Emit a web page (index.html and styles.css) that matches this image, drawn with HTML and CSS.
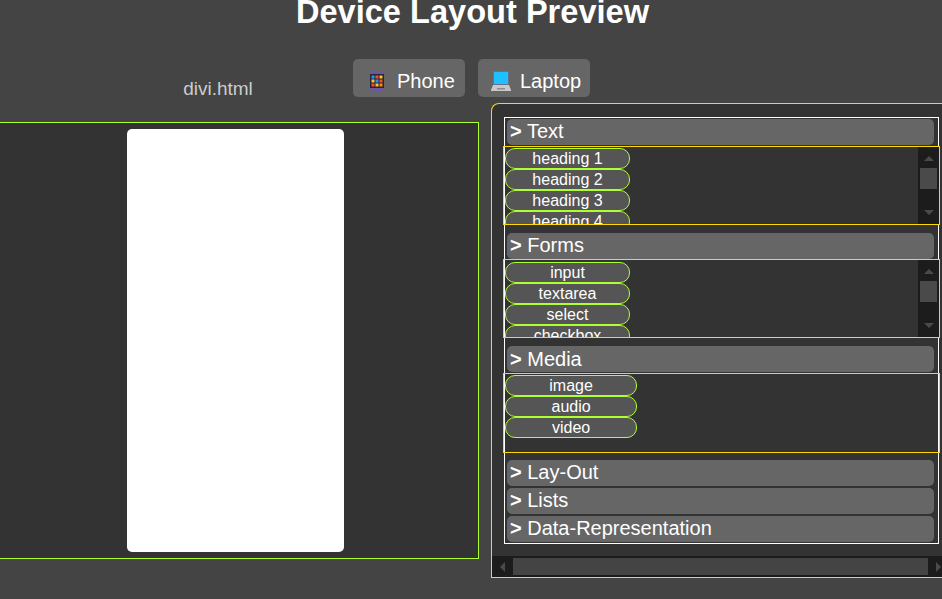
FILE: index.html
```html
<!DOCTYPE html>
<html lang="en">
<head>
    <meta charset="UTF-8">
    <meta name="viewport" content="width=device-width, initial-scale=1.0">
    <title>Device Layout Preview</title>
    <link rel="stylesheet" href="styles.css">
</head>
<body>
    <h1 class="title">Device Layout Preview</h1>
    <div class="toolbar">
        <div class="file-name">divi.html</div>
        <button class="device-btn phone-btn">
            <svg class="icon" width="20" height="20" viewBox="0 0 20 20">
                <rect x="3" y="0" width="14" height="20" rx="2" fill="#6a5a9a"/>
                <rect x="3" y="3" width="14" height="14" fill="#2a2438"/>
                <rect x="4.5" y="4.5" width="3" height="3" fill="#2196f3"/>
                <rect x="8.5" y="4.5" width="3" height="3" fill="#f4511e"/>
                <rect x="12.5" y="4.5" width="3" height="3" fill="#fbc02d"/>
                <rect x="4.5" y="8.5" width="3" height="3" fill="#fbc02d"/>
                <rect x="8.5" y="8.5" width="3" height="3" fill="#2196f3"/>
                <rect x="12.5" y="8.5" width="3" height="3" fill="#f4511e"/>
                <rect x="4.5" y="12.5" width="3" height="3" fill="#f4511e"/>
                <rect x="8.5" y="12.5" width="3" height="3" fill="#fbc02d"/>
                <rect x="12.5" y="12.5" width="3" height="3" fill="#fb8c00"/>
            </svg>
            Phone
        </button>
        <button class="device-btn">
            <svg class="icon" width="20" height="20" viewBox="0 0 20 20">
                <rect x="2" y="0" width="16" height="14" fill="#6a6f8a"/>
                <rect x="3" y="1" width="14" height="12" fill="#1fc0ff"/>
                <path d="M2 14h16l2 5v1H0v-1z" fill="#c9c9c9"/>
                <rect x="6" y="17" width="8" height="1.5" fill="#8d8d8d"/>
            </svg>
            Laptop
        </button>
    </div>
    <div class="workspace">
        <div class="preview">
            <div class="screen"></div>
        </div>
        <div class="panel">
            <div class="panel-body">
                <div class="groups">
                    <div class="group-head"><b>&gt;</b> Text</div>
                    <div class="group-list">
                        <div class="items">
                            <div class="item">heading 1</div>
                            <div class="item">heading 2</div>
                            <div class="item">heading 3</div>
                            <div class="item">heading 4</div>
                        </div>
                        <div class="vbar">
                            <span class="arrow-up"></span>
                            <span class="vthumb"></span>
                            <span class="arrow-down"></span>
                        </div>
                    </div>
                    <div class="group-head next"><b>&gt;</b> Forms</div>
                    <div class="group-list forms-list">
                        <div class="items">
                            <div class="item">input</div>
                            <div class="item">textarea</div>
                            <div class="item">select</div>
                            <div class="item">checkbox</div>
                        </div>
                        <div class="vbar">
                            <span class="arrow-up"></span>
                            <span class="vthumb"></span>
                            <span class="arrow-down"></span>
                        </div>
                    </div>
                    <div class="group-head next media-head"><b>&gt;</b> Media</div>
                    <div class="group-list media-list">
                        <div class="items">
                            <div class="item">image</div>
                            <div class="item">audio</div>
                            <div class="item">video</div>
                        </div>
                    </div>
                    <div class="group-head after-media"><b>&gt;</b> Lay-Out</div>
                    <div class="group-head"><b>&gt;</b> Lists</div>
                    <div class="group-head last"><b>&gt;</b> Data-Representation</div>
                </div>
            </div>
            <div class="hbar">
                <span class="hbtn"><span class="arrow-left"></span></span>
                <span class="hthumb"></span>
                <span class="hbtn"><span class="arrow-right"></span></span>
            </div>
        </div>
    </div>
</body>
</html>
```

FILE: styles.css
```css
html, body {
    margin: 0;
    height: 100%;
}
body {
    background-color: #444;
    color: white;
    font-family: "Liberation Sans", Arial, sans-serif;
    overflow: hidden;
}
.title {
    margin: -7px 0 0;
    padding-left: 3px;
    font-size: 32.6px;
    line-height: 37px;
    text-align: center;
}
.toolbar {
    display: flex;
    gap: 13px;
    margin-top: 29px;
    padding-left: 96px;
}
.file-name {
    width: 244px;
    padding-top: 19px;
    color: #ccc;
    font-size: 19px;
    line-height: 22px;
    text-align: center;
}
.device-btn {
    display: flex;
    align-items: center;
    gap: 9px;
    width: 112px;
    height: 38px;
    padding: 6px 0 0 13px;
    border: none;
    border-radius: 5px;
    background-color: #666;
    color: white;
    font-family: inherit;
    font-size: 20px;
}
.phone-btn {
    gap: 10px;
    padding-left: 14px;
}
.icon {
    flex: none;
}
.workspace {
    display: flex;
    align-items: flex-start;
    gap: 12px;
    margin-top: 3px;
    margin-left: -8px;
}
.preview {
    flex: none;
    display: flex;
    justify-content: center;
    width: 487px;
    height: 437px;
    box-sizing: border-box;
    margin-top: 19px;
    padding-top: 6px;
    border: 1px solid greenyellow;
    background-color: #333;
}
.screen {
    width: 217px;
    height: 423px;
    border-radius: 5px;
    background-color: white;
}
.panel {
    flex: none;
    width: 460px;
    height: 475px;
    box-sizing: border-box;
    border: 1px solid #ffd700;
    border-right: none;
    border-radius: 8px 0 0 0;
    background-color: #333;
    overflow: hidden;
}
.panel-body {
    height: 452px;
    padding: 13px 0 0 12px;
    box-sizing: border-box;
}
.groups {
    width: 435px;
    box-sizing: border-box;
    padding: 1px 0;
    border: 1px solid white;
}
.group-head {
    height: 26px;
    margin: 0 4px 2px 2px;
    padding-left: 3px;
    border-radius: 5px;
    background-color: #666;
    font-size: 20px;
    line-height: 24px;
}
.group-head.next {
    margin-top: 8px;
}
.group-head.media-head {
    line-height: 26px;
}
.group-head.after-media {
    margin-top: 7px;
}
.group-head.last {
    margin-bottom: 0;
}
.group-list {
    display: flex;
    height: 79px;
    box-sizing: border-box;
    margin: -1px -2px 0 -2px;
    border: 1px solid #ffd700;
    overflow: hidden;
}
.forms-list {
    margin-top: -2px;
}
.media-list {
    height: 80px;
}
.items {
    flex: 1;
    padding: 1px 0 0 1px;
}
.items:not(:last-child) {
    padding-right: 3px;
}
.forms-list .items {
    padding-top: 2px;
}
.item {
    width: 30%;
    height: 19px;
    border: 1px solid greenyellow;
    border-radius: 10px;
    background-color: #555;
    font-size: 16px;
    line-height: 19px;
    text-align: center;
}
.vbar {
    flex: none;
    display: flex;
    flex-direction: column;
    align-items: center;
    width: 21px;
    background-color: #1c1c1c;
}
.vthumb {
    width: 17px;
    height: 21px;
    margin: 7px 0 21px;
    background-color: #4a4a4a;
}
.arrow-up, .arrow-down, .arrow-left, .arrow-right {
    display: block;
    width: 0;
    height: 0;
    border-style: solid;
    border-color: transparent;
}
.arrow-up {
    margin-top: 9px;
    border-width: 0 5px 5px;
    border-bottom-color: #4a4a4a;
}
.arrow-down {
    border-width: 5px 5px 0;
    border-top-color: #4a4a4a;
}
.hbar {
    display: flex;
    height: 21px;
    background-color: #1c1c1c;
}
.hbtn {
    flex: none;
    display: flex;
    align-items: center;
    justify-content: center;
    width: 21px;
}
.hthumb {
    flex: none;
    width: 415px;
    height: 17px;
    margin-top: 2px;
    background-color: #444;
}
.arrow-left {
    border-width: 5px 5px 5px 0;
    border-right-color: #4a4a4a;
}
.arrow-right {
    border-width: 5px 0 5px 5px;
    border-left-color: #4a4a4a;
}
```
